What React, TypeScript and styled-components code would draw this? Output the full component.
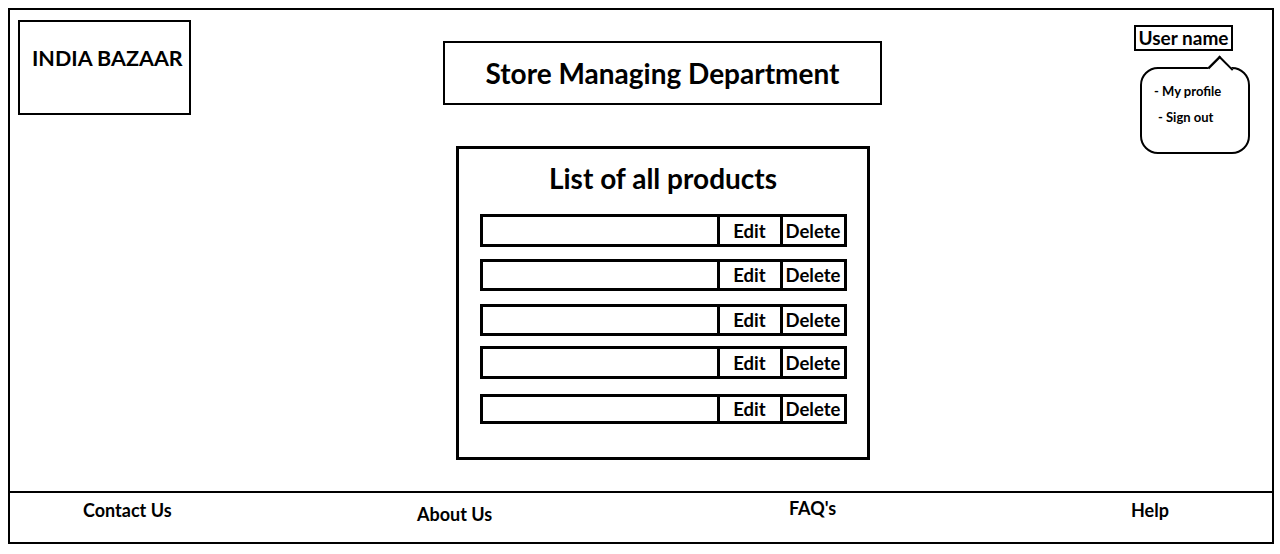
import styled, { createGlobalStyle } from "styled-components";

const GlobalStyle = createGlobalStyle`
  body {
    margin: 0;
    background: #ffffff;
    font-family: Lato, "Open Sans", "Liberation Sans", sans-serif;
    color: #000000;
  }
`;

const Frame = styled.div`
  box-sizing: border-box;
  display: flex;
  flex-direction: column;
  width: 1266px;
  height: 536px;
  margin: 8px 0 0 8px;
  border: 2px solid #000;
`;

const Header = styled.header`
  display: flex;
  align-items: flex-start;
  flex: 1;
  padding: 0 22px 0 8px;
`;

const Logo = styled.div`
  box-sizing: border-box;
  width: 173px;
  height: 95px;
  margin-top: 10px;
  padding: 24px 0 0 12px;
  border: 2px solid #000;
  font-size: 21.5px;
  font-weight: 700;
  line-height: 24px;
  white-space: nowrap;
`;

const Center = styled.main`
  flex: 1;
  display: flex;
  flex-direction: column;
  align-items: center;
`;

const TitleBox = styled.h1`
  box-sizing: border-box;
  display: flex;
  align-items: center;
  justify-content: center;
  width: 439px;
  height: 64px;
  margin: 31px 0 0;
  border: 2px solid #000;
  font-size: 28px;
  font-weight: 700;
`;

const Panel = styled.section`
  box-sizing: border-box;
  width: 414px;
  height: 314px;
  margin-top: 41px;
  padding: 0 20px 0 21px;
  border: 3px solid #000;
`;

const PanelTitle = styled.h2`
  margin: 14px 0 21px;
  text-align: center;
  font-size: 28px;
  line-height: 30px;
  font-weight: 700;
`;

const ProductRow = styled.div<{ $gap: number; $height: number }>`
  box-sizing: border-box;
  display: flex;
  width: 367px;
  height: ${(p) => p.$height}px;
  margin-top: ${(p) => p.$gap}px;
  border: 3px solid #000;
`;

const NameCell = styled.div`
  flex: 1;
`;

const ActionCell = styled.div<{ $width: number }>`
  display: flex;
  align-items: center;
  justify-content: center;
  width: ${(p) => p.$width}px;
  border-left: 3px solid #000;
  font-size: 18.5px;
  font-weight: 700;
`;

const UserArea = styled.aside`
  width: 116px;
  margin-top: 15px;
  display: flex;
  flex-direction: column;
`;

const UserName = styled.div`
  box-sizing: border-box;
  width: 99px;
  height: 26px;
  border: 2px solid #000;
  font-size: 19px;
  font-weight: 700;
  line-height: 21px;
  text-align: center;
  white-space: nowrap;
`;

const Bubble = styled.ul`
  position: relative;
  box-sizing: border-box;
  width: 110px;
  height: 87px;
  margin: 16px 0 0 6px;
  padding: 9px 0 0 12px;
  border: 2px solid #000;
  border-radius: 18px;
  list-style: none;

  &::before {
    content: "";
    position: absolute;
    top: -9px;
    left: 70px;
    width: 15px;
    height: 15px;
    background: #fff;
    border-top: 2px solid #000;
    border-left: 2px solid #000;
    transform: rotate(45deg) scaleX(1.15);
  }
`;

const BubbleItem = styled.li<{ $indent: number }>`
  padding-left: ${(p) => p.$indent}px;
  font-size: 13px;
  font-weight: 700;
  line-height: 26px;
`;

const Footer = styled.footer`
  box-sizing: border-box;
  display: grid;
  grid-template-columns: 73px 334px 372px 342px 1fr;
  height: 51px;
  border-top: 2px solid #000;
`;

const FooterLink = styled.a<{ $col: number; $dy: number }>`
  grid-column: ${(p) => p.$col};
  margin-top: ${(p) => p.$dy}px;
  font-size: 18px;
  font-weight: 700;
  line-height: 20px;
  color: #000;
  text-decoration: none;
`;

const rows = [
  { gap: 0, height: 33 },
  { gap: 12, height: 32 },
  { gap: 13, height: 32 },
  { gap: 10, height: 33 },
  { gap: 15, height: 30 },
];

const links = [
  { label: "Contact Us", dy: 7 },
  { label: "About Us", dy: 11 },
  { label: "FAQ's", dy: 5 },
  { label: "Help", dy: 7 },
];

const App = () => {
  return (
    <>
      <GlobalStyle />
      <Frame>
        <Header>
          <Logo>INDIA BAZAAR</Logo>
          <Center>
            <TitleBox>Store Managing Department</TitleBox>
            <Panel>
              <PanelTitle>List of all products</PanelTitle>
              {rows.map((row, idx) => (
                <ProductRow key={`row${idx}`} $gap={row.gap} $height={row.height}>
                  <NameCell />
                  <ActionCell $width={60}>Edit</ActionCell>
                  <ActionCell $width={61}>Delete</ActionCell>
                </ProductRow>
              ))}
            </Panel>
          </Center>
          <UserArea>
            <UserName>User name</UserName>
            <Bubble>
              <BubbleItem $indent={0}>- My profile</BubbleItem>
              <BubbleItem $indent={4}>- Sign out</BubbleItem>
            </Bubble>
          </UserArea>
        </Header>
        <Footer>
          {links.map((link, idx) => (
            <FooterLink key={link.label} href="#" $col={idx + 2} $dy={link.dy}>
              {link.label}
            </FooterLink>
          ))}
        </Footer>
      </Frame>
    </>
  );
};

export default App;
